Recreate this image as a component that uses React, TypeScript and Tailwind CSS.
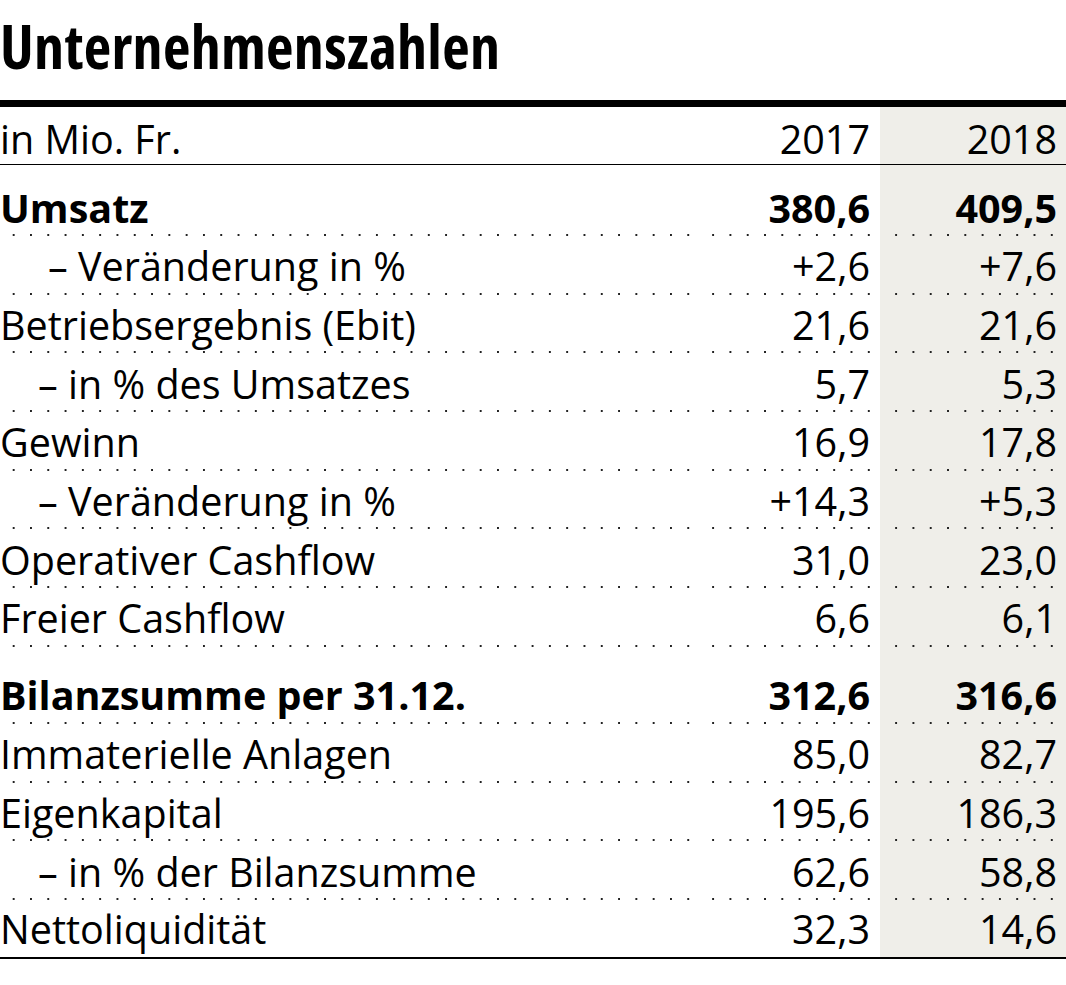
type Row = {
  label: string;
  a: string;
  b: string;
  bold?: boolean;
  indent?: string;
  h: string;
  last?: boolean;
};

const rows: Row[] = [
  { label: "Umsatz", a: "380,6", b: "409,5", bold: true, h: "h-[71px]" },
  { label: "– Veränderung in %", a: "+2,6", b: "+7,6", indent: "pl-[48px]", h: "h-[58.7px]" },
  { label: "Betriebsergebnis (Ebit)", a: "21,6", b: "21,6", h: "h-[58.7px]" },
  { label: "– in % des Umsatzes", a: "5,7", b: "5,3", indent: "pl-[38px]", h: "h-[58.7px]" },
  { label: "Gewinn", a: "16,9", b: "17,8", h: "h-[58.7px]" },
  { label: "– Veränderung in %", a: "+14,3", b: "+5,3", indent: "pl-[38px]", h: "h-[58.7px]" },
  { label: "Operativer Cashflow", a: "31,0", b: "23,0", h: "h-[58.7px]" },
  { label: "Freier Cashflow", a: "6,6", b: "6,1", h: "h-[58.7px]" },
  { label: "Bilanzsumme per 31.12.", a: "312,6", b: "316,6", bold: true, h: "h-[77px]" },
  { label: "Immaterielle Anlagen", a: "85,0", b: "82,7", h: "h-[58.75px]" },
  { label: "Eigenkapital", a: "195,6", b: "186,3", h: "h-[58.75px]" },
  { label: "– in % der Bilanzsumme", a: "62,6", b: "58,8", indent: "pl-[38px]", h: "h-[58.75px]" },
  { label: "Nettoliquidität", a: "32,3", b: "14,6", h: "h-[57px]", last: true },
];

const dots =
  "bg-[linear-gradient(to_right,#222_2px,transparent_2px)] bg-[length:17.3px_2px] bg-repeat-x bg-bottom";

function DataRow({ row }: { row: Row }) {
  const weight = row.bold ? "font-bold" : "font-normal";
  const line = row.last ? "" : dots;
  return (
    <div className={`grid grid-cols-[700px_180px_186px] ${row.h} ${weight}`}>
      <div className={`flex items-end pb-[8px] ${row.indent ?? ""} ${line}`}>{row.label}</div>
      <div className={`flex items-end justify-end pb-[8px] pr-[10px] ${line}`}>{row.a}</div>
      <div className={`flex items-end justify-end pb-[8px] pr-[9px] bg-[#efeee9] ${line}`}>{row.b}</div>
    </div>
  );
}

export default function App() {
  return (
    <div className="w-[1066px] h-[985px] bg-white text-black font-['Open_Sans',sans-serif]">
      <h1 className="h-[100px] pt-[16px] text-[60px] font-bold leading-none tracking-[0.3px] [font-stretch:75%]">
        Unternehmenszahlen
      </h1>
      <div className="h-[7px] bg-black" />
      <div className="text-[39.5px] leading-none [font-stretch:95%]">
        <div className="grid grid-cols-[700px_180px_186px] h-[58px] border-b-[1.5px] border-black">
          <div className="flex items-end pb-[5px]">in Mio. Fr.</div>
          <div className="flex items-end justify-end pb-[5px] pr-[10px]">2017</div>
          <div className="flex items-end justify-end pb-[5px] pr-[9px] bg-[#efeee9]">2018</div>
        </div>
        {rows.map((row, i) => (
          <DataRow key={i} row={row} />
        ))}
        <div className="h-[1.5px] bg-black" />
      </div>
    </div>
  );
}
